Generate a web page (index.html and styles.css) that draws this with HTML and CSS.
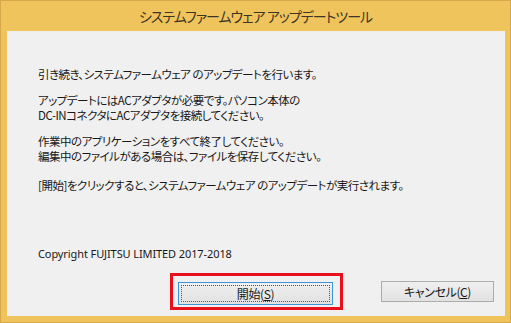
FILE: index.html
```html
<!DOCTYPE html>
<html lang="ja">
<head>
<meta charset="utf-8">
<title>システムファームウェア アップデートツール</title>
<link rel="stylesheet" href="styles.css">
</head>
<body>
<div class="window">
  <div class="titlebar">システムファームウェア アップデートツール</div>
  <div class="client">
    <div class="messages">
      <p>引き続き、システムファームウェア のアップデートを行います。</p>
      <p>アップデートにはACアダプタが必要です。パソコン本体の<br>DC-INコネクタにACアダプタを接続してください。</p>
      <p>作業中のアプリケーションをすべて終了してください。<br>編集中のファイルがある場合は、ファイルを保存してください。</p>
      <p>[開始]をクリックすると、システムファームウェア のアップデートが実行されます。</p>
    </div>
    <div class="copyright">Copyright FUJITSU LIMITED 2017-2018</div>
    <div class="buttons">
      <div class="highlight">
        <button class="btn btn-start"><span class="focus">開始(<u>S</u>)</span></button>
      </div>
      <button class="btn btn-cancel">キャンセル(<u>C</u>)</button>
    </div>
  </div>
</div>
</body>
</html>
```
FILE: styles.css
```css
* { box-sizing: border-box; }
html, body { margin: 0; padding: 0; }
body {
  width: 511px;
  height: 323px;
  overflow: hidden;
  background: #efc35c;
  font-family: "Noto Sans CJK JP", "Noto Sans", sans-serif;
  font-feature-settings: "palt";
}
.window {
  width: 511px;
  height: 323px;
  background: #f0c45d;
  border: 1px solid #d7a849;
  display: flex;
  flex-direction: column;
}
.titlebar {
  height: 30px;
  line-height: 31px;
  text-align: center;
  font-size: 14px;
  color: #3c3424;
  letter-spacing: -1px;
}
.client {
  margin: 0 5px 0 6px;
  height: 285px;
  background: #f0f0f0;
  display: flex;
  flex-direction: column;
  padding: 36px 0 0 31px;
  color: #181818;
}
.messages p {
  margin: 0 0 11px 0;
  font-size: 11.5px;
  line-height: 15px;
  letter-spacing: -0.5px;
}
.messages p:last-child { margin-top: 14px; margin-bottom: 0; }
.copyright {
  margin-top: 53px;
  font-family: "Noto Sans", sans-serif;
  font-size: 11px;
  line-height: 15px;
  letter-spacing: -0.1px;
  color: #181818;
}
.buttons {
  display: flex;
  align-items: center;
  margin-top: 12px;
  padding-left: 132px;
}
.highlight {
  border: 3px solid #e8101c;
  width: 173px;
  height: 37px;
  padding: 4px 7px 0 5px;
}
.btn {
  font-family: "Noto Sans CJK JP", "Noto Sans", sans-serif;
  font-feature-settings: "palt";
  font-size: 12px;
  letter-spacing: -0.4px;
  color: #181818;
  background: linear-gradient(#efefef, #e2e2e2);
  border: 1px solid #acacac;
  padding: 0;
  margin: 0;
  height: 23px;
}
.btn-start {
  width: 155px;
  border-color: #3c95d9;
  padding: 2px;
}
.focus {
  display: flex;
  align-items: center;
  justify-content: center;
  height: 100%;
  border: 1px dotted #555;
}
.btn-cancel {
  width: 113px;
  height: 21px;
  margin-left: 38px;
}
u { text-decoration-thickness: 1px; text-underline-offset: 1px; }
```
